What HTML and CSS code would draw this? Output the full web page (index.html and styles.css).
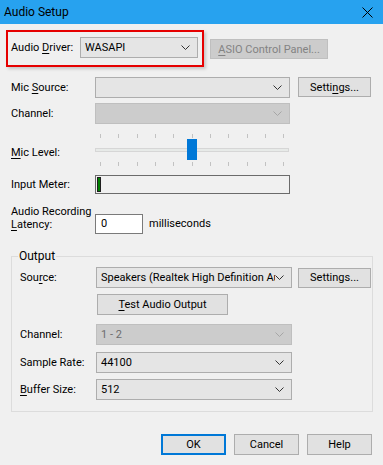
FILE: index.html
```html
<!DOCTYPE html>
<html lang="en">
<head>
    <meta charset="UTF-8">
    <meta name="viewport" content="width=device-width, initial-scale=1.0">
    <link rel="stylesheet" href="styles.css">
</head>
<body>
    <div class="dialog">
        <div class="titlebar">
            <span class="title">Audio Setup</span>
            <svg class="close" width="11" height="11" viewBox="0 0 11 11">
                <path d="M0.5 0.5 L10.5 10.5 M10.5 0.5 L0.5 10.5" stroke="#000" stroke-width="1" fill="none"/>
            </svg>
        </div>

        <div class="driver-row">
            <div class="highlight">
                <span class="driver-label">Audio <u>D</u>river:</span>
                <div class="combo driver-combo">
                    <span class="combo-text">WASAPI</span>
                    <svg class="chev" width="9" height="5" viewBox="0 0 9 5"><path d="M0.5 0.5 L4.5 4.5 L8.5 0.5" stroke="#333" fill="none"/></svg>
                </div>
            </div>
            <button class="btn btn-off asio"><u>A</u>SIO Control Panel...</button>
        </div>

        <div class="row row-source">
            <span class="label">Mic <u>S</u>ource:</span>
            <div class="combo wide">
                <span class="combo-text"></span>
                <svg class="chev" width="9" height="5" viewBox="0 0 9 5"><path d="M0.5 0.5 L4.5 4.5 L8.5 0.5" stroke="#333" fill="none"/></svg>
            </div>
            <button class="btn side">Setti<u>n</u>gs...</button>
        </div>

        <div class="row row-channel">
            <span class="label">Channel:</span>
            <div class="combo wide combo-off">
                <span class="combo-text"></span>
                <svg class="chev" width="9" height="5" viewBox="0 0 9 5"><path d="M0.5 0.5 L4.5 4.5 L8.5 0.5" stroke="#a6a6a6" fill="none"/></svg>
            </div>
        </div>

        <div class="row row-level">
            <span class="label"><u>M</u>ic Level:</span>
            <svg class="slider" width="195" height="34" viewBox="0 0 195 34">
                <g stroke="#c2c2c2" stroke-width="1">
                    <path d="M5.5 1 V5 M23.5 1 V5 M42.5 1 V5 M60.5 1 V5 M78.5 1 V5 M97.5 1 V5 M115.5 1 V5 M133.5 1 V5 M152.5 1 V5 M170.5 1 V5 M188.5 1 V5"/>
                    <path d="M5.5 29 V33 M23.5 29 V33 M42.5 29 V33 M60.5 29 V33 M78.5 29 V33 M97.5 29 V33 M115.5 29 V33 M133.5 29 V33 M152.5 29 V33 M170.5 29 V33 M188.5 29 V33"/>
                </g>
                <rect x="0.5" y="15.5" width="193" height="3" fill="#e7eae8" stroke="#d6d6d6"/>
                <rect x="92" y="6" width="10" height="21" fill="#0078d7"/>
            </svg>
        </div>

        <div class="row row-meter">
            <span class="label">Input Meter:</span>
            <div class="meter">
                <div class="meter-bar"></div>
            </div>
        </div>

        <div class="row row-latency">
            <span class="label latency-label">Audio Recording<br><u>L</u>atency:</span>
            <div class="text-input">0</div>
            <span class="unit">milliseconds</span>
        </div>

        <fieldset class="output">
            <legend>Output</legend>

            <div class="orow orow-source">
                <span class="olabel">Sou<u>r</u>ce:</span>
                <div class="combo owide">
                    <span class="combo-text">Speakers (Realtek High Definition Au</span>
                    <svg class="chev" width="9" height="5" viewBox="0 0 9 5"><path d="M0.5 0.5 L4.5 4.5 L8.5 0.5" stroke="#333" fill="none"/></svg>
                </div>
                <button class="btn side oside">Settings...</button>
            </div>

            <button class="btn test"><u>T</u>est Audio Output</button>

            <div class="orow orow-channel">
                <span class="olabel">Channel:</span>
                <div class="combo owide combo-off">
                    <span class="combo-text">1 - 2</span>
                    <svg class="chev" width="9" height="5" viewBox="0 0 9 5"><path d="M0.5 0.5 L4.5 4.5 L8.5 0.5" stroke="#a6a6a6" fill="none"/></svg>
                </div>
            </div>

            <div class="orow orow-rate">
                <span class="olabel">Sample Rate:</span>
                <div class="combo owide">
                    <span class="combo-text">44100</span>
                    <svg class="chev" width="9" height="5" viewBox="0 0 9 5"><path d="M0.5 0.5 L4.5 4.5 L8.5 0.5" stroke="#333" fill="none"/></svg>
                </div>
            </div>

            <div class="orow orow-buffer">
                <span class="olabel"><u>B</u>uffer Size:</span>
                <div class="combo owide">
                    <span class="combo-text">512</span>
                    <svg class="chev" width="9" height="5" viewBox="0 0 9 5"><path d="M0.5 0.5 L4.5 4.5 L8.5 0.5" stroke="#333" fill="none"/></svg>
                </div>
            </div>
        </fieldset>

        <div class="actions">
            <button class="btn action default">OK</button>
            <button class="btn action">Cancel</button>
            <button class="btn action">Help</button>
        </div>
    </div>
</body>
</html>
```

FILE: styles.css
```css
* {
    box-sizing: border-box;
}

body {
    margin: 0;
    background-color: #f0f0f0;
    font-family: 'Roboto', 'Noto Sans', sans-serif;
    font-size: 11px;
    line-height: 13px;
    color: #000;
}

u {
    text-decoration-thickness: 1px;
    text-underline-offset: 2px;
}

.dialog {
    width: 383px;
    height: 465px;
    background-color: #f0f0f0;
    overflow: hidden;
    white-space: nowrap;
}

.titlebar {
    height: 24px;
    background-color: #27a2ef;
    display: flex;
    align-items: center;
    justify-content: space-between;
    padding: 0 10px 0 4px;
}

.title {
    font-size: 12px;
}

/* base controls */
.btn {
    font-family: inherit;
    font-size: 11px;
    line-height: 13px;
    color: #000;
    background-color: #e1e1e1;
    border: 1px solid #adadad;
    padding: 0;
    margin: 0;
    height: 21px;
}

.btn-off {
    background-color: #cccccc;
    border-color: #bfbfbf;
    color: #838383;
}

.combo {
    display: flex;
    align-items: center;
    justify-content: space-between;
    height: 21px;
    background-color: #e5e5e5;
    border: 1px solid #adadad;
    padding: 0 7px 0 4px;
}

.combo-text {
    white-space: nowrap;
    overflow: hidden;
    flex: 1;
}

.chev {
    flex-shrink: 0;
}

.combo-off {
    background-color: #cccccc;
    border-color: #bfbfbf;
    color: #6d6d6d;
}

/* highlighted driver selector */
.driver-row {
    display: flex;
    align-items: flex-start;
    margin-top: 6px;
}

.highlight {
    display: flex;
    align-items: center;
    margin-left: 6px;
    border: 2px solid #e60000;
    padding: 5px 4px 7px 3px;
    box-shadow: 2px 2px 3px rgba(0, 0, 0, 0.18);
}

.driver-label {
    width: 69px;
}

.driver-combo {
    width: 118px;
}

.asio {
    margin-left: 6px;
    margin-top: 9px;
    width: 118px;
    height: 20px;
}

.row {
    display: flex;
    align-items: center;
    padding-left: 11px;
}

.label {
    width: 84px;
    flex-shrink: 0;
}

.wide {
    width: 195px;
}

.side {
    margin-left: 8px;
    width: 73px;
    height: 20px;
}

.row-source {
    margin-top: 10px;
}

.row-source .side {
    margin-top: -1px;
}

.row-channel {
    margin-top: 5px;
}

.row-level {
    margin-top: 9px;
}

.row-level .label {
    margin-top: 4px;
}

.row-meter {
    margin-top: 8px;
}

.meter {
    width: 195px;
    height: 19px;
    border: 1px solid #6b6b6b;
    padding: 1px;
}

.meter-bar {
    width: 4px;
    height: 15px;
    background-color: #008000;
    border: 1px solid #1e1e1e;
}

.row-latency {
    align-items: flex-start;
    margin-top: 11px;
}

.latency-label {
    line-height: 13px;
}

.text-input {
    margin-top: 9px;
    width: 48px;
    height: 20px;
    background-color: #fff;
    border: 1px solid #7a7a7a;
    padding: 2px 0 0 5px;
}

.unit {
    margin-top: 12px;
    margin-left: 6px;
}

/* output group */
.output {
    margin: 14px 0 0 11px;
    width: 362px;
    border: 1px solid #dcdcdc;
    padding: 3px 0 11px 6px;
}

.output legend {
    padding: 0 1px;
    line-height: 16px;
    font-size: 12px;
}

.orow {
    display: flex;
    align-items: center;
    padding-left: 2px;
}

.olabel {
    width: 76px;
    flex-shrink: 0;
}

.owide {
    width: 196px;
}

.oside {
    margin-left: 6px;
}

.test {
    display: block;
    margin: 6px 0 0 79px;
    width: 131px;
}

.orow-channel {
    margin-top: 9px;
}

.orow-rate {
    margin-top: 7px;
}

.orow-buffer {
    margin-top: 6px;
}

/* dialog buttons */
.actions {
    display: flex;
    justify-content: flex-end;
    gap: 8px;
    margin-top: 22px;
    padding-right: 11px;
}

.action {
    width: 65px;
}

.default {
    border: 2px solid #0078d7;
}
```
